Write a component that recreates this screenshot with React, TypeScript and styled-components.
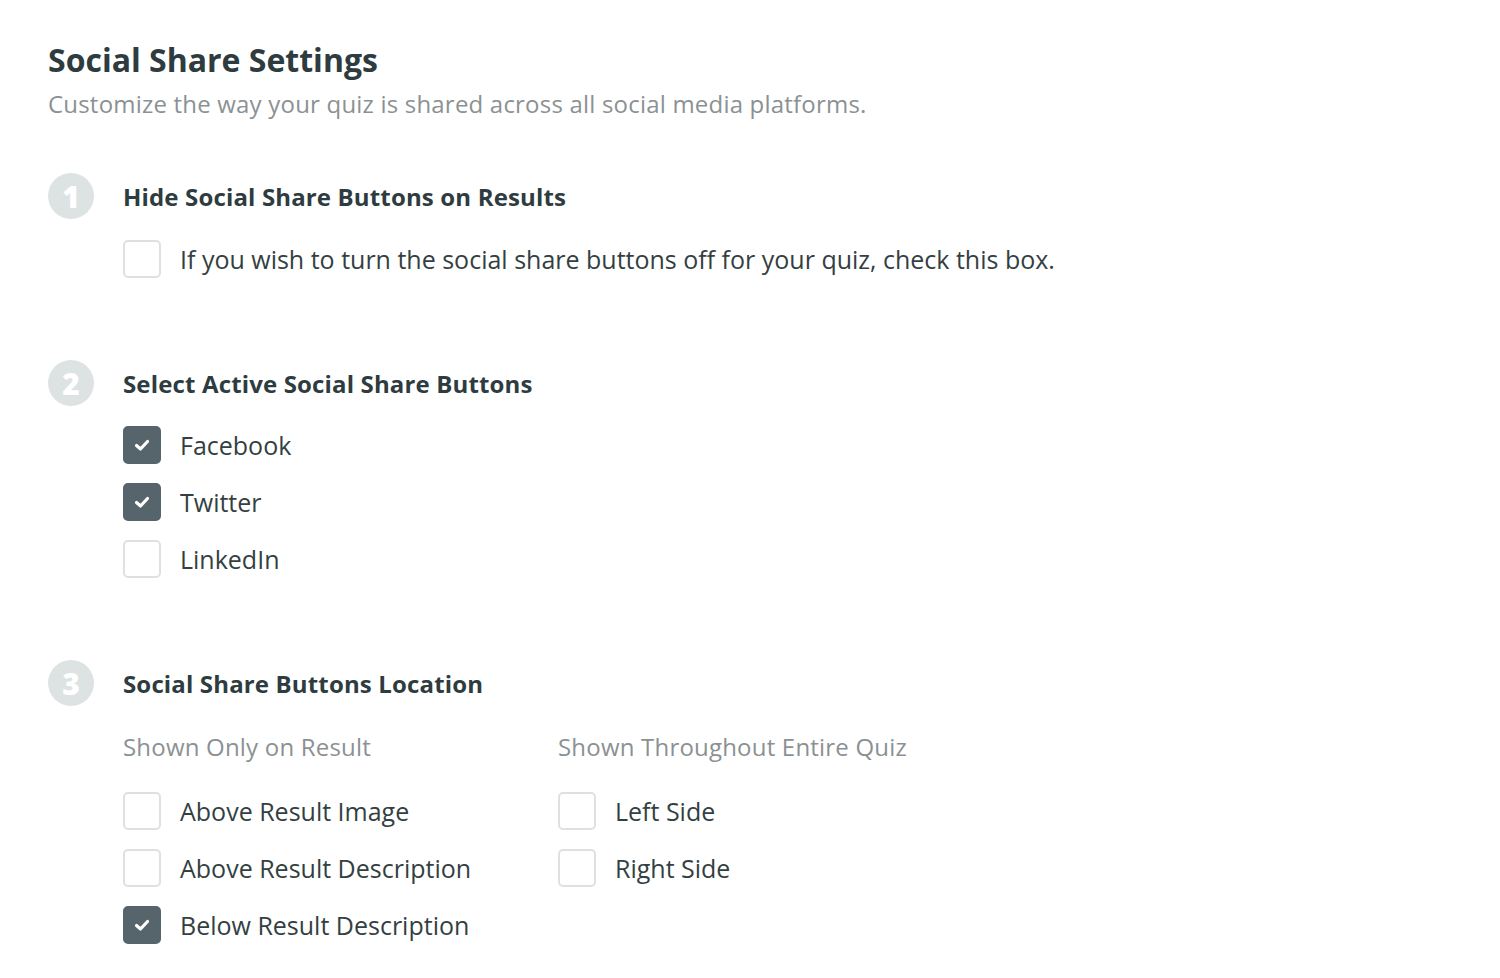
import React from "react";
import styled, { createGlobalStyle } from "styled-components";

const Global = createGlobalStyle`
  html, body { margin: 0; padding: 0; background: #ffffff; }
  body { font-family: "Open Sans", "Lato", sans-serif; -webkit-font-smoothing: antialiased; }
  * { box-sizing: border-box; }
`;

const Page = styled.div`
  padding: 38px 48px 0 48px;
  color: #2f3d40;
`;

const Title = styled.h1`
  margin: 0;
  font-size: 32px;
  line-height: 44px;
  font-weight: 700;
  color: #2e3c3f;
`;

const Subtitle = styled.p`
  margin: 0;
  font-size: 24px;
  line-height: 44px;
  letter-spacing: 0.2px;
  color: #8b9193;
`;

const Sections = styled.div`
  display: flex;
  flex-direction: column;
  gap: 82px;
  margin-top: 47px;
`;

const Section = styled.section`
  display: grid;
  grid-template-columns: 46px 1fr;
  column-gap: 29px;
`;

const StepBadge = styled.div`
  width: 46px;
  height: 46px;
  border-radius: 50%;
  background: #dde3e3;
  color: #ffffff;
  font-weight: 800;
  font-size: 30px;
  display: flex;
  align-items: center;
  justify-content: center;
`;

const Body = styled.div`
  display: flex;
  flex-direction: column;
`;

const Heading = styled.h2`
  margin: 0;
  height: 46px;
  display: flex;
  align-items: center;
  font-size: 24px;
  letter-spacing: 0.15px;
  font-weight: 700;
  color: #2e3c3f;
`;

const List = styled.div<{ $top: number }>`
  display: flex;
  flex-direction: column;
  gap: 19px;
  margin-top: ${(p) => p.$top}px;
`;

const Row = styled.label`
  display: flex;
  align-items: center;
  gap: 19px;
  height: 38px;
  font-size: 25px;
  color: #343f42;
`;

const Box = styled.span<{ $checked: boolean }>`
  width: 38px;
  height: 38px;
  flex: none;
  border-radius: 5px;
  border: 2px solid ${(p) => (p.$checked ? "#56656b" : "#e0e0e0")};
  background: ${(p) => (p.$checked ? "#56656b" : "#ffffff")};
  display: flex;
  align-items: center;
  justify-content: center;
`;

const Columns = styled.div`
  display: grid;
  grid-template-columns: 435px 1fr;
  margin-top: 21px;
`;

const Column = styled.div`
  display: flex;
  flex-direction: column;
`;

const ColumnLabel = styled.div`
  font-size: 24px;
  letter-spacing: 0.2px;
  height: 38px;
  display: flex;
  align-items: center;
  color: #8b9193;
`;

const Check = ({ checked, label }: { checked: boolean; label: string }) => (
  <Row>
    <Box $checked={checked}>
      {checked && (
        <svg width="18" height="14" viewBox="0 0 18 14">
          <path d="M3.5 7.5 L7.5 11 L14.5 3.5" fill="none" stroke="#fff" strokeWidth="3.2" strokeLinecap="round" strokeLinejoin="round" />
        </svg>
      )}
    </Box>
    {label}
  </Row>
);

export default function App() {
  return (
    <>
      <Global />
      <Page>
        <Title>Social Share Settings</Title>
        <Subtitle>Customize the way your quiz is shared across all social media platforms.</Subtitle>
        <Sections>
          <Section>
            <StepBadge>1</StepBadge>
            <Body>
              <Heading>Hide Social Share Buttons on Results</Heading>
              <List $top={21}>
                <Check checked={false} label="If you wish to turn the social share buttons off for your quiz, check this box." />
              </List>
            </Body>
          </Section>
          <Section>
            <StepBadge>2</StepBadge>
            <Body>
              <Heading>Select Active Social Share Buttons</Heading>
              <List $top={20}>
                <Check checked label="Facebook" />
                <Check checked label="Twitter" />
                <Check checked={false} label="LinkedIn" />
              </List>
            </Body>
          </Section>
          <Section>
            <StepBadge>3</StepBadge>
            <Body>
              <Heading>Social Share Buttons Location</Heading>
              <Columns>
                <Column>
                  <ColumnLabel>Shown Only on Result</ColumnLabel>
                  <List $top={27}>
                    <Check checked={false} label="Above Result Image" />
                    <Check checked={false} label="Above Result Description" />
                    <Check checked label="Below Result Description" />
                  </List>
                </Column>
                <Column>
                  <ColumnLabel>Shown Throughout Entire Quiz</ColumnLabel>
                  <List $top={27}>
                    <Check checked={false} label="Left Side" />
                    <Check checked={false} label="Right Side" />
                  </List>
                </Column>
              </Columns>
            </Body>
          </Section>
        </Sections>
      </Page>
    </>
  );
}
